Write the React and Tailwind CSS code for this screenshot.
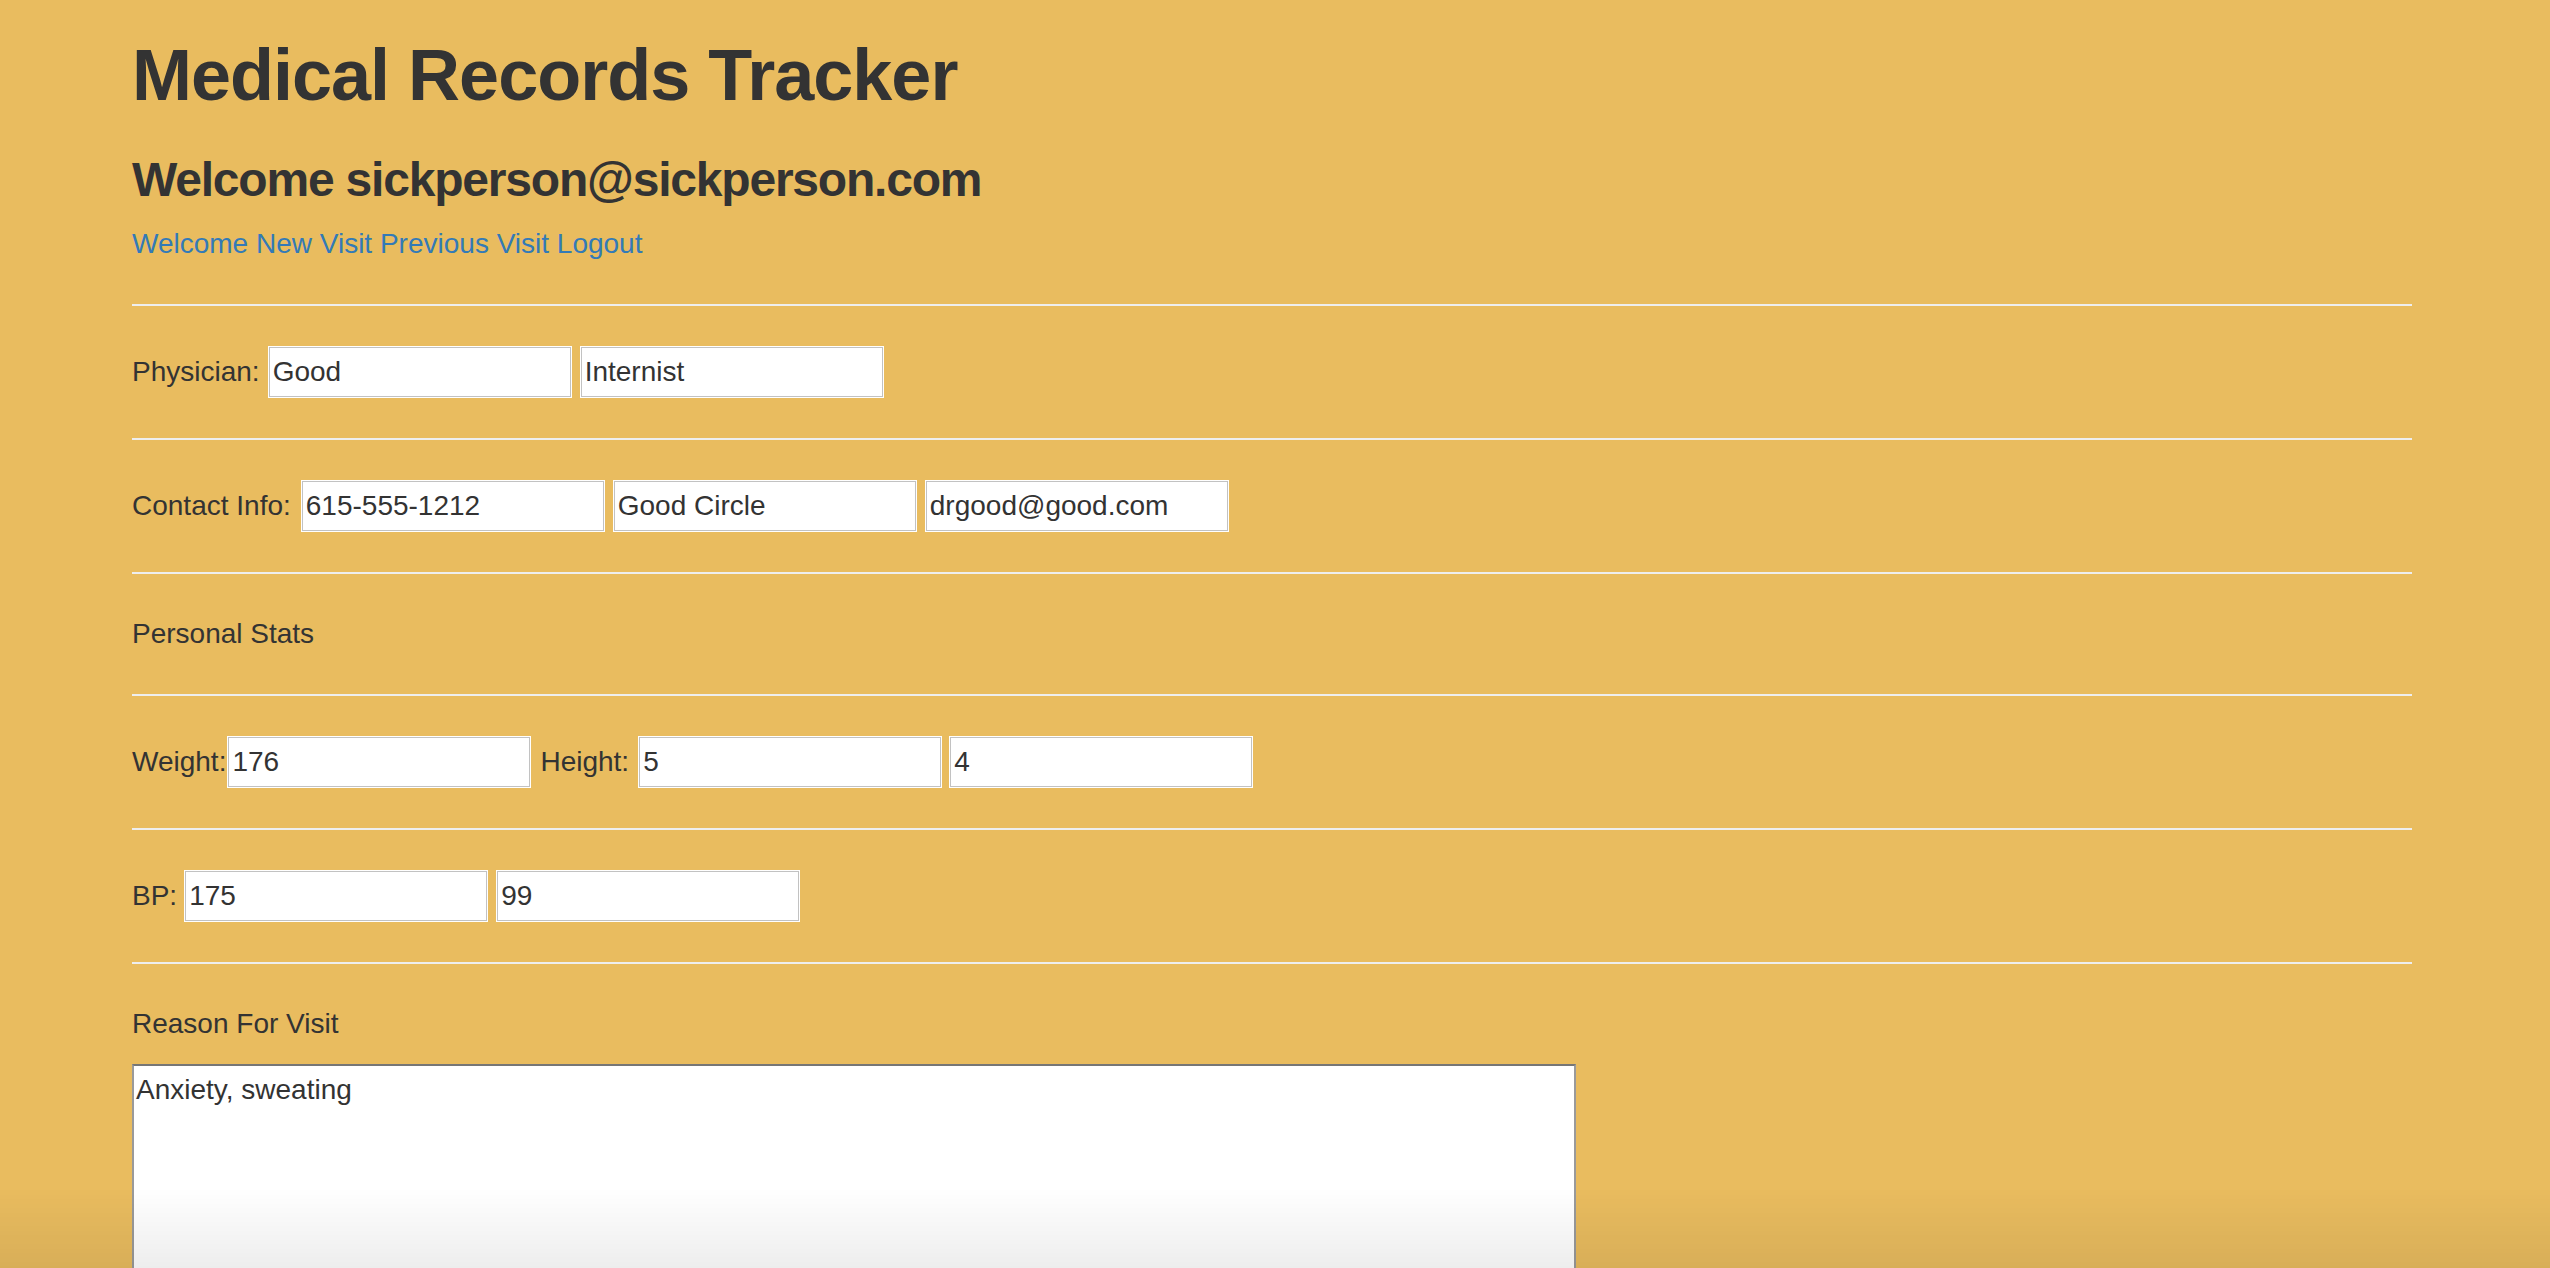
import React from 'react';

const field = 'w-[304px] h-[52px] bg-white border border-white shadow-[inset_0_0_0_1px_#c2c2c2] px-[4px] text-[28px] text-[#333] outline-none';

function Rule() {
  return <hr className="mt-[40px] border-0 border-t-2 border-[#eeeeee]" />;
}

function Field({ value, className = '' }) {
  return <input type="text" defaultValue={value} className={`${field} ${className}`} />;
}

export default function App() {
  return (
    <div className="min-h-screen bg-[#e9bc5f] text-[#333] font-['Liberation_Sans',Arial,sans-serif] pb-[200px]">
      <div className="ml-[132px] w-[2280px]">
        <h1 className="pt-[36px] text-[72px] leading-[79px] tracking-[-1px] font-bold">Medical Records Tracker</h1>
        <h3 className="mt-[38px] text-[48px] leading-[53px] tracking-[-1.2px] font-bold">Welcome sickperson@sickperson.com</h3>
        <div className="mt-[18px] text-[28px] leading-[40px] text-[#337ab7]">
          <a href="#">Welcome</a> <a href="#">New Visit</a> <a href="#">Previous Visit</a> <a href="#">Logout</a>
        </div>

        <Rule />
        <div className="mt-[40px] h-[52px] flex items-center text-[28px]">
          <span className="mr-[8px]">Physician:</span>
          <Field value="Good" />
          <Field value="Internist" className="ml-[8px]" />
        </div>

        <Rule />
        <div className="mt-[40px] h-[52px] flex items-center text-[28px]">
          <span className="mr-[10px]">Contact Info:</span>
          <Field value="615-555-1212" />
          <Field value="Good Circle" className="ml-[8px]" />
          <Field value="drgood@good.com" className="ml-[8px]" />
        </div>

        <Rule />
        <div className="mt-[40px] text-[28px] leading-[40px]">Personal Stats</div>

        <Rule />
        <div className="mt-[40px] h-[52px] flex items-center text-[28px]">
          <span className="mr-[1px]">Weight:</span>
          <Field value="176" />
          <span className="ml-[9px] mr-[9px]">Height:</span>
          <Field value="5" />
          <Field value="4" className="ml-[7px]" />
        </div>

        <Rule />
        <div className="mt-[40px] h-[52px] flex items-center text-[28px]">
          <span className="mr-[7px]">BP:</span>
          <Field value="175" />
          <Field value="99" className="ml-[8px]" />
        </div>

        <Rule />
        <div className="mt-[40px] text-[28px] leading-[40px]">Reason For Visit</div>
        <textarea
          defaultValue="Anxiety, sweating"
          className="mt-[20px] block w-[1444px] h-[420px] bg-white border-2 border-[#9a9a9a] border-t-[#767676] px-[2px] pt-[4px] text-[28px] leading-[40px] text-[#333] outline-none"
        />
      </div>
      <div className="pointer-events-none fixed inset-x-0 bottom-0 h-[80px] bg-linear-to-b from-transparent to-black/[0.07]" />
    </div>
  );
}
